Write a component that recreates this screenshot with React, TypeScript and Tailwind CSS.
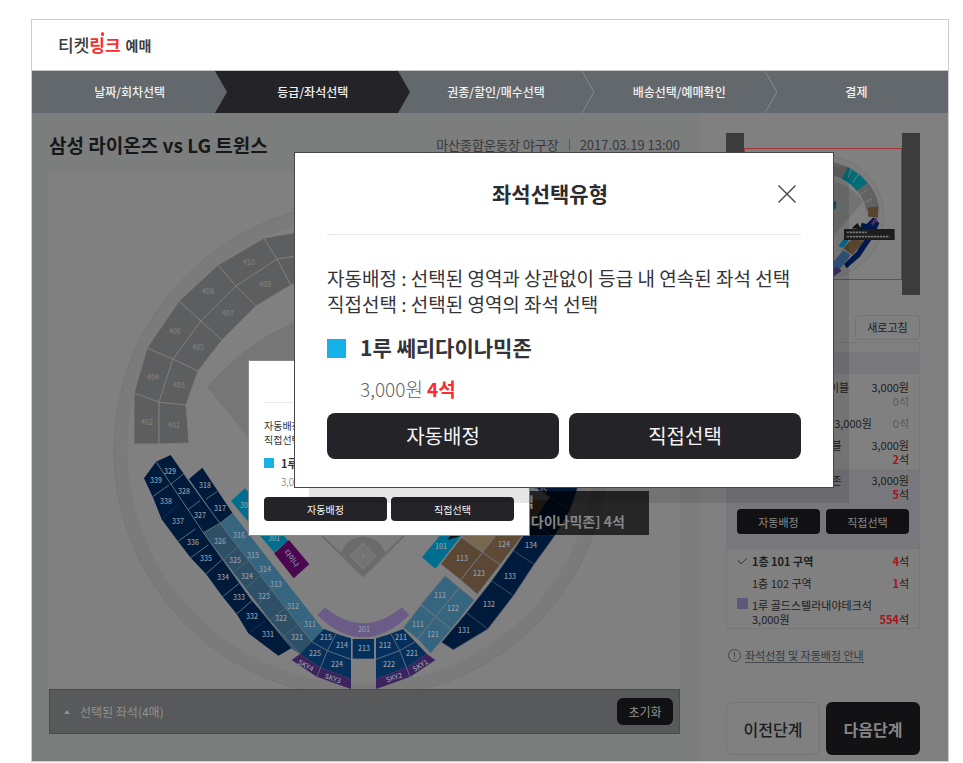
import clsx from 'clsx';

type Step = { label: string; active?: boolean };
type Label = [text: string, x: number, y: number, rotate?: number];
type Point = [x: number, y: number];

const STEPS: Step[] = [
  { label: '날짜/회차선택' },
  { label: '등급/좌석선택', active: true },
  { label: '권종/할인/매수선택' },
  { label: '배송선택/예매확인' },
  { label: '결제' },
];

// Outfield seats: three rings of corner points, outside to inside
const OUTER: Point[] = [[134, 444], [134, 393], [147, 348], [179, 301], [218, 265], [264, 238], [310, 230]];
const MIDDLE: Point[] = [[159, 444], [159, 402], [173, 359], [201, 321], [236, 286], [277, 259], [310, 254]];
const INNER: Point[] = [[189, 443], [186, 405], [198, 371], [222, 340], [256, 306], [291, 285], [310, 280]];

const GREY_LABELS: Label[] = [
  ['402', 147, 422], ['401', 174, 425], ['404', 153, 377], ['403', 179, 385], ['406', 175, 331],
  ['405', 198, 347], ['408', 208, 291], ['407', 228, 313], ['410', 249, 262], ['409', 265, 284],
];

const SEAT_LABELS: Label[] = [
  ['329', 170, 471], ['339', 156, 480], ['338', 166, 501], ['328', 184, 491], ['318', 205, 485],
  ['337', 178, 521], ['327', 200, 515], ['317', 220, 508], ['336', 193, 542], ['326', 220, 541],
  ['316', 239, 535], ['335', 206, 558], ['325', 235, 560], ['315', 253, 555], ['334', 223, 577],
  ['324', 247, 576], ['314', 265, 569], ['333', 239, 597], ['323', 264, 596], ['313', 276, 584],
  ['332', 252, 616], ['322', 281, 618], ['312', 293, 606], ['331', 268, 634], ['321', 297, 637],
  ['311', 310, 624], ['215', 326, 637], ['214', 342, 645], ['213', 364, 648], ['212', 385, 645],
  ['211', 401, 637], ['225', 315, 653], ['224', 337, 664], ['222', 389, 664], ['221', 412, 653],
  ['SKY4', 306, 665, 28], ['SKY3', 333, 678, 18], ['SKY2', 394, 677, -18], ['SKY1', 420, 665, -32],
  ['201', 364, 629], ['302', 246, 505], ['301', 274, 538], ['다이나', 292, 558, 52],
  ['101', 441, 546], ['113', 462, 558], ['124', 504, 544], ['123', 479, 573], ['134', 531, 545],
  ['133', 510, 576], ['132', 489, 604], ['131', 464, 630], ['112', 440, 595], ['122', 453, 608],
  ['111', 418, 624], ['121', 433, 634], ['135', 541, 490],
];

const toPoints = (points: Point[]) => points.map((p) => p.join(',')).join(' ');

function StepBar() {
  return (
    <ol className="grid h-[42px] grid-cols-5 bg-[#62686c]">
      {STEPS.map((step, i) => {
        const last = i === STEPS.length - 1;
        const nextToActive = step.active || STEPS[i + 1]?.active;
        return (
          <li
            key={step.label}
            aria-current={step.active ? 'step' : undefined}
            className={clsx(
              'relative flex items-center justify-center text-[12px] font-medium text-[#f1f1f2]',
              step.active && 'bg-[#242328]',
              !last && 'pl-3',
            )}
          >
            {step.label}
            {!last && (
              <svg
                viewBox="0 0 12 42"
                preserveAspectRatio="none"
                className="absolute left-full top-0 z-10 h-full w-3"
                aria-hidden="true"
              >
                <path d="M0 0 L12 21 L0 42 Z" fill={step.active ? '#242328' : '#62686c'} />
                {!nextToActive && <path d="M0 0 L12 21 L0 42" fill="none" stroke="#868b8f" />}
              </svg>
            )}
          </li>
        );
      })}
    </ol>
  );
}

function MapLabels({ labels, fill }: { labels: Label[]; fill: string }) {
  return (
    <g fill={fill} fontSize="7" fontWeight="500" textAnchor="middle">
      {labels.map(([text, x, y, rotate]) => (
        <text key={text} x={x} y={y + 3} transform={rotate ? `rotate(${rotate} ${x} ${y})` : undefined}>
          {text}
        </text>
      ))}
    </g>
  );
}

// One half of the block behind home plate; the other half is its mirror image
function HomeBlock() {
  return (
    <>
      <path d="M612 597 L660 615 L693 625 V747 L600 712 L540 672 Z" fill="#06305c" stroke="none" />
      <path d="M515 690 L540 672 L600 712 L693 747 V777 L590 740 Z" fill="#3d2260" stroke="none" />
      <path
        d="M648 612 L622 662 L590 742 M575 635 L622 662 L693 688"
        fill="none"
        stroke="#5d6b78"
        strokeWidth="3"
      />
    </>
  );
}

function StadiumMap() {
  return (
    <svg viewBox="49 173 631 516" className="block h-auto w-full bg-[#808080]" role="img" aria-label="좌석 배치도">
      <circle cx="361" cy="450" r="240" fill="none" stroke="#7b7b7b" strokeWidth="13" />
      <circle cx="361" cy="450" r="247" fill="none" stroke="#737373" strokeDasharray="5 1" />

      {/* field */}
      <path d="M207 387 Q275 310 363 308 Q451 310 519 387 L363 577 Z" fill="#767676" />
      <path d="M300 515 L363 577 L426 515 Z" fill="#7c7c7c" />
      <path d="M300 514 L363 576 L426 514" fill="none" stroke="#6c6c6c" strokeWidth="2" />
      <path d="M341 553 A23 23 0 0 1 385 553 L363 575 Z" fill="#6a6b6b" />
      <path d="M363 543 L376 556 L363 569 L350 556 Z" fill="#747474" stroke="#7d7d7d" />
      <circle cx="363" cy="556" r="1" fill="#888888" />

      <g fill="#5d5e60" stroke="#7d7c7a" strokeWidth="1">
        {OUTER.slice(1).map((_, i) => (
          <g key={i}>
            <polygon points={toPoints([OUTER[i], OUTER[i + 1], MIDDLE[i + 1], MIDDLE[i]])} />
            <polygon points={toPoints([MIDDLE[i], MIDDLE[i + 1], INNER[i + 1], INNER[i]])} />
          </g>
        ))}
      </g>
      <MapLabels labels={GREY_LABELS} fill="#7e7e7e" />

      {/* third base side */}
      <g transform="translate(120 430) scale(.33333)" stroke="#5d6b78" strokeWidth="3">
        <path
          d="M72 145 L108 95 L250 308 L395 510 L514 655 L475 677 L385 610 L350 552 L308 500 L258 432 L212 383 L175 335 L125 268 L100 205 Z"
          fill="#001a3b"
          stroke="none"
        />
        <path d="M108 95 L152 75 L190 130 L300 280 L250 308 Z" fill="#001a3b" stroke="none" />
        <path d="M207 147 L247 113 L338 250 L300 280 Z" fill="#001a3b" stroke="none" />
        <path d="M250 308 L300 280 L575 635 L540 672 L514 655 Z" fill="#2d5067" stroke="none" />
        <path d="M300 280 L338 250 L615 605 L575 635 Z" fill="#35657f" stroke="none" />
        <path d="M108 95 L250 308 L395 510 L540 672 M190 130 L300 280 L575 635" fill="none" />
        <path
          d="M98 200 L147 165 M175 333 L226 297 M212 383 L265 345 M258 432 L305 390 M308 500 L358 460 M350 552 L396 512 M152 163 L190 132 M250 308 L300 280 L338 250 M258 208 L292 184 M205 238 L240 212"
          fill="none"
        />
        <path
          d="M312 388 L352 352 L388 312 M342 425 L385 392 L428 365 M372 480 L415 442 L460 405 M408 530 L450 482 L498 450 M448 572 L496 535 L535 502 M490 620 L535 582 L580 550"
          fill="none"
          strokeWidth="2"
        />
        <path d="M125 268 L172 225 M385 610 L435 572" fill="none" stroke="#12305a" />

        <path d="M333 213 L375 175 L505 333 L462 367 Z" fill="#006f8f" stroke="none" />
        <path d="M462 370 L507 330 L568 403 L521 445 Z" fill="#4b0650" stroke="none" />

        <HomeBlock />
        <g transform="translate(1461 0) scale(-1 1)">
          <HomeBlock />
        </g>
        <path d="M698 627 H762 V686 H698 Z" fill="#06305c" stroke="none" />
        <path
          d="M592 555 L615 532 Q730 628 845 532 L868 555 Q800 622 730 622 Q660 622 592 555 Z"
          fill="#6a5c86"
          stroke="none"
        />
      </g>

      {/* first base side */}
      <g transform="translate(390 430) scale(.33333)" stroke="#6f7478" strokeWidth="3">
        <path d="M96 382 L136 416 L290 220 L230 220 Z" fill="#006f8f" stroke="none" />
        <path d="M172 330 L185 312 L212 318 Z" fill="#111111" stroke="none" />
        <path d="M152 402 L215 322 L278 367 L212 450 Z" fill="#5b4733" />
        <path d="M215 322 L300 210 L400 210 L278 367 Z" fill="#77674f" />
        <path d="M278 367 L400 210 L480 210 L330 405 Z" fill="#5f4a35" />
        <path d="M212 450 L278 367 L330 405 L262 493 Z" fill="#5b4733" />
        <path d="M165 437 L208 473 L137 560 L93 523 Z" fill="#35657f" />
        <path d="M208 473 L253 510 L183 598 L137 560 Z" fill="#35657f" />
        <path d="M93 525 L137 560 L83 627 L40 593 Z" fill="#35657f" />
        <path d="M137 560 L183 598 L122 670 L83 627 Z" fill="#35657f" />
        <g fill="#001a3b" stroke="#3f4d60" strokeWidth="2">
          <path d="M398 320 L480 200 L420 165 L565 165 L540 240 L492 320 L432 403 L370 362 Z" />
          <path d="M370 362 L432 403 L370 497 L305 453 Z" />
          <path d="M305 453 L370 497 L293 597 L230 548 Z" />
          <path d="M230 548 L293 597 L190 659 L155 637 Z" />
          <path d="M460 190 L535 235 M405 270 L492 320" fill="none" />
        </g>
      </g>
      <MapLabels labels={SEAT_LABELS} fill="#8f9aa6" />
    </svg>
  );
}

function MiniMap() {
  return (
    <div className="flex justify-between bg-[#808080]">
      <div className="w-[18px] bg-[#3c3c3c]" />
      <div className="my-[15px] flex-1 border border-[#a33538]">
        <svg viewBox="745 149 156 130" className="block h-[130px] w-full" aria-hidden="true">
          <circle cx="823" cy="217" r="61" fill="#7d7d7d" stroke="#767676" />
          <circle cx="823" cy="217" r="43" fill="#808080" />
          <g fill="none" strokeWidth="13">
            <path d="M823 168 A50 50 0 0 1 873 210" stroke="#626264" />
            <path d="M845 173 A50 50 0 0 1 862 187" stroke="#006d78" />
            <path d="M873 207 A50 50 0 0 1 873 217" stroke="#58432c" strokeWidth="10" />
          </g>
          <path d="M852 167 L848 178 M860 172 L853 182 M867 190 L857 196 M872 199 L862 203" stroke="#7a7a7a" />
          <g transform="translate(700 120) scale(.33333)">
            <path d="M370 175 Q440 185 490 245 L380 370 Z" fill="#717373" />
            <path d="M396 248 L408 243 L407 266 L396 266 Z" fill="#00466f" />
            <path d="M520 292 L538 310 L520 350 L480 410 L440 445 L432 432 L470 395 L500 345 L480 330 L485 308 L500 312 Z" fill="#00194a" />
            <path d="M513 308 L528 292 L532 302 L518 318 Z" fill="#4e2a66" />
            <path d="M430 385 L455 358 L494 362 L457 405 Z" fill="#584530" />
            <path d="M415 378 L436 352 L446 362 L428 384 Z" fill="#006f8f" />
            <path d="M395 432 L430 390 L453 405 L412 455 Z" fill="#34597f" />
            <path d="M385 450 L412 440 L425 452 L400 470 Z" fill="#3b3468" />
            <path d="M455 325 L472 309 L485 328 Z" fill="#151515" />
            <path d="M432 327 H584 V360 H432 Z" fill="#1d1d1d" />
            <path d="M440 337 H500 M440 350 H568" stroke="#777777" strokeWidth="5" strokeDasharray="7 2" />
          </g>
        </svg>
      </div>
      <div className="h-[162px] w-[18px] bg-[#3c3c3c]" />
    </div>
  );
}

function Seats({ count }: { count: number }) {
  return (
    <span className={count ? 'text-[#1d1e20]' : 'text-[#5a5b62]'}>
      <b className={count ? 'font-bold text-[#a81219]' : 'font-normal'}>{count}</b>석
    </span>
  );
}

function GradeRow({ name, seats }: { name: string; seats: number }) {
  return (
    <li className="flex justify-between pl-[15px]">
      <span>{name}</span>
      <span className="flex flex-col items-end">
        <span>3,000원</span>
        <Seats count={seats} />
      </span>
    </li>
  );
}

function GradeList() {
  return (
    <div className="mt-[2px] border border-[#777779] text-[11px] leading-[14px] text-[#1d1e20]">
      <div className="mt-[9px] h-[22px] bg-[#78787c]" />
      <ul className="flex flex-col gap-2 px-[10px] pb-[3px] pt-[6px]">
        <GradeRow name="1루내야패밀리테이블" seats={0} />
        <li className="flex pl-[15px]">
          <span className="flex-1">응원지정석</span>
          <span className="pr-[21px]">3,000원</span>
          <Seats count={0} />
        </li>
        <GradeRow name="3루 내야커플테이블" seats={2} />
      </ul>
      <div className="bg-[#78787c] px-[10px] pb-[15px] pt-1">
        <ul>
          <GradeRow name="1루 쎄리다이나믹존" seats={5} />
        </ul>
        <div className="mt-2 grid grid-cols-2 gap-[6px] text-[#8b8b8b]">
          <button type="button" className="h-[25px] rounded bg-[#111113]">자동배정</button>
          <button type="button" className="h-[25px] rounded bg-[#111113]">직접선택</button>
        </div>
      </div>
      <ul className="flex flex-col gap-2 px-[10px] pb-[2px] pt-[5px]">
        <li className="flex items-center">
          <svg viewBox="0 0 11 8" className="mr-1 h-2 w-[11px]" aria-hidden="true">
            <path d="M1 3 L4 7 L10 1" fill="none" stroke="#333333" />
          </svg>
          <b className="flex-1 font-bold">1층 101 구역</b>
          <Seats count={4} />
        </li>
        <li className="flex pl-[15px]">
          <span className="flex-1">1층 102 구역</span>
          <Seats count={1} />
        </li>
        <li className="flex">
          <span className="mr-1 h-[11px] w-[11px] bg-[#5e5779]" />
          <span className="flex-1">
            1루 골드스텔라내야테크석
            <span className="flex justify-between">
              <span>3,000원</span>
              <Seats count={554} />
            </span>
          </span>
        </li>
      </ul>
    </div>
  );
}

function SeatTypeDialog({ large }: { large?: boolean }) {
  return (
    <section
      role="dialog"
      aria-label="좌석선택유형"
      className={clsx(
        'absolute border bg-white text-[#333338]',
        large
          ? 'left-[262px] top-[132px] z-30 w-[540px] border-[#47474b] px-8 pb-7 shadow-[15px_15px_0_rgba(0,0,0,0.1)]'
          : 'left-[216px] top-[340px] z-20 w-[282px] border-[#8a8a8a] px-[15px] pb-[14px]',
      )}
    >
      <header className={clsx('flex items-center border-b border-[#e8e8f2]', large ? 'h-[82px]' : 'h-[42px]')}>
        <h2 className={clsx('flex-1 text-center font-bold text-[#2b2b30]', large ? 'text-[21px]' : 'text-[11px]')}>
          좌석선택유형
        </h2>
        <button type="button" aria-label="닫기" className={clsx('flex justify-center', large ? 'w-7' : 'w-4')}>
          <svg viewBox="0 0 18 18" className={large ? 'h-[18px] w-[18px]' : 'h-2 w-2'} aria-hidden="true">
            <path d="M0.5 0.5 L17.5 17.5 M17.5 0.5 L0.5 17.5" stroke="#444448" strokeWidth="1.4" />
          </svg>
        </button>
      </header>
      <p
        className={clsx(
          'whitespace-nowrap',
          large ? 'mt-[30px] text-[19px] leading-[26px]' : 'mt-4 text-[10px] leading-[14px]',
        )}
      >
        자동배정 : 선택된 영역과 상관없이 등급 내 연속된 좌석 선택
        <br />
        직접선택 : 선택된 영역의 좌석 선택
      </p>
      <h3
        className={clsx(
          'flex items-center font-bold',
          large ? 'mt-[17px] h-7 gap-[14px] text-[21px]' : 'mt-[9px] h-[14px] gap-[7px] text-[11px]',
        )}
      >
        <span className={clsx('bg-[#17b1ea]', large ? 'h-[19px] w-[19px]' : 'h-[10px] w-[10px]')} />
        1루 쎄리다이나믹존
      </h3>
      <p
        className={clsx(
          'font-light text-[#5f656b]',
          large ? 'mt-[14px] pl-[33px] text-[19px] leading-[26px]' : 'mt-[5px] pl-[17px] text-[10px] leading-[14px]',
        )}
      >
        3,000원 <b className="font-bold text-[#fa2a30]">4석</b>
      </p>
      <div
        className={clsx(
          'grid grid-cols-2',
          large ? 'mt-[11px] gap-[10px] text-[20px]' : 'mt-2 gap-1 text-[10px]',
        )}
      >
        {['자동배정', '직접선택'].map((label) => (
          <button
            key={label}
            type="button"
            className={clsx('bg-[#242328] text-[#f4f4f5]', large ? 'h-[46px] rounded-lg' : 'h-6 rounded')}
          >
            {label}
          </button>
        ))}
      </div>
    </section>
  );
}

export default function App() {
  return (
    <div className="min-h-screen bg-white pl-[31px] pr-[14px] pt-[19px] font-['Noto_Sans_CJK_KR','Noto_Sans',sans-serif]">
      <div className="relative border border-[#cdccd6]">
        <header className="flex h-[51px] items-center border-b border-[#c4c5c9] pl-[26px]">
          <h1 className="flex items-center text-[17px] font-medium text-[#3c3c3f]">
            티켓
            <span className="relative font-bold text-[#fb2b30]">
              링크
              <span className="absolute left-[12px] top-0 h-1 w-[3px] rounded-full bg-[#fb2b30]" />
            </span>
            <span className="ml-[5px] text-[14px] font-bold">예매</span>
          </h1>
        </header>
        <StepBar />

        <div className="flex">
          <main className="min-w-0 flex-1 bg-[#7c7d7d] pb-[27px] pl-[17px] pr-[19px]">
            <div className="flex h-[60px] items-center justify-between pt-1">
              <h2 className="text-[19px] font-bold text-[#161719]">삼성 라이온즈 vs LG 트윈스</h2>
              <p className="flex items-center text-[13px] text-[#37393c]">
                마산종합운동장 야구장
                <span className="mx-[10px] h-3 w-px bg-[#55585b]" />
                2017.03.19 13:00
              </p>
            </div>
            <div className="relative">
              <StadiumMap />
              <div className="absolute left-[66%] top-[318px] h-[44px] w-[184px] bg-black/70 pl-[10px] text-[14px] font-bold leading-[20px] text-[#858585]">
                <p>1층 1구역</p>
                <p className="whitespace-nowrap">[1루 쎄리다이나믹존] 4석</p>
              </div>
            </div>
            <div className="flex h-[45px] items-center border border-[#4a4b4c] bg-[#58595b] pl-[14px] pr-[6px] text-[12px] text-[#919191]">
              <svg viewBox="0 0 6 4" className="mr-[10px] h-1 w-[6px]" aria-hidden="true">
                <path d="M0 4 L3 0 L6 4 Z" fill="#919191" />
              </svg>
              <span className="flex-1">선택된 좌석(4매)</span>
              <button type="button" className="h-[27px] w-14 rounded-md bg-[#111113]">
                초기화
              </button>
            </div>
          </main>

          <aside className="w-[249px] bg-[#808080] pb-[6px] pl-[27px] pr-7 pt-5">
            <MiniMap />
            <div className="mt-5 flex justify-end">
              <button
                type="button"
                className="h-[25px] w-[65px] rounded border border-[#747477] text-[11px] text-[#1d1e20]"
              >
                새로고침
              </button>
            </div>
            <GradeList />
            <a href="#guide" className="mt-[18px] flex h-4 items-center gap-1 pl-[2px] text-[11px] text-[#35393d]">
              <svg viewBox="0 0 13 13" className="h-[13px] w-[13px]" aria-hidden="true">
                <circle cx="6.5" cy="6.5" r="6" fill="none" stroke="#44474b" />
                <path d="M6.5 3 V7.5 M6.5 8.5 V10" stroke="#44474b" />
              </svg>
              <span className="border-b border-[#44474b] leading-[14px]">좌석선점 및 자동배정 안내</span>
            </a>
            <div className="mt-[39px] grid grid-cols-2 gap-[6px] text-[16px]">
              <button type="button" className="h-[53px] rounded-md border border-[#757577] font-medium text-[#1b1c1e]">
                이전단계
              </button>
              <button type="button" className="h-[53px] rounded-md bg-[#121214] font-bold text-[#868686]">
                다음단계
              </button>
            </div>
          </aside>
        </div>

        <SeatTypeDialog />
        <SeatTypeDialog large />
      </div>
    </div>
  );
}
